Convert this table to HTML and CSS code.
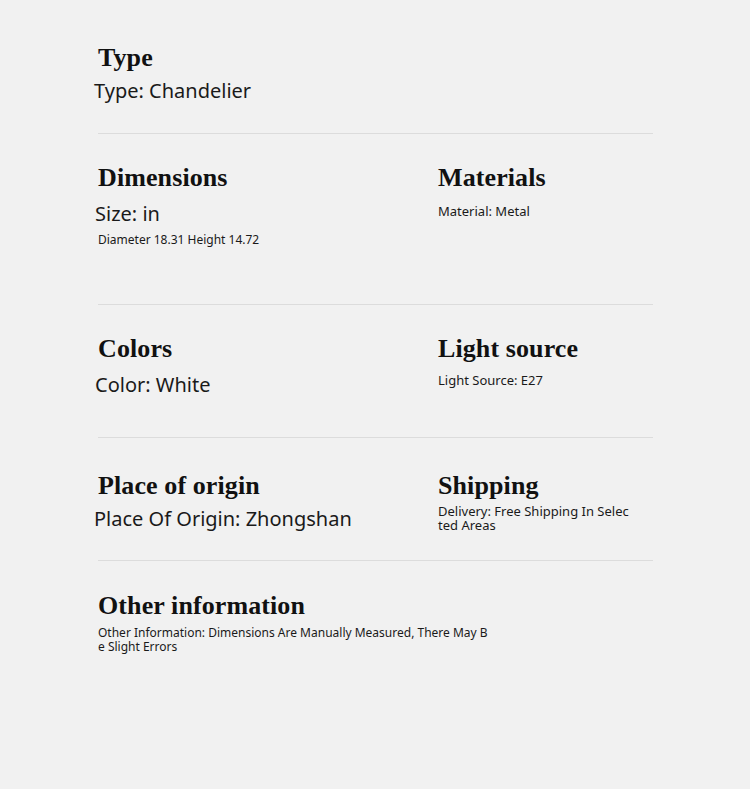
FILE: index.html
```html
<!DOCTYPE html>
<html lang="en">
<head>
<meta charset="utf-8">
<title>Specifications</title>
<link rel="stylesheet" href="styles.css">
</head>
<body>
<main class="specs">
  <section class="block block-type">
    <h2 class="title">Type</h2>
    <p class="val-lg nudge">Type: Chandelier</p>
  </section>

  <section class="block row row-dim">
    <div class="col">
      <h2 class="title">Dimensions</h2>
      <p class="val-lg nudge1">Size: in</p>
      <p class="val-sm dim-detail">Diameter 18.31 Height 14.72</p>
    </div>
    <div class="col">
      <h2 class="title">Materials</h2>
      <p class="val-sm mat">Material: Metal</p>
    </div>
  </section>

  <section class="block row row-col">
    <div class="col">
      <h2 class="title">Colors</h2>
      <p class="val-lg nudge1">Color: White</p>
    </div>
    <div class="col">
      <h2 class="title">Light source</h2>
      <p class="val-sm light">Light Source: E27</p>
    </div>
  </section>

  <section class="block row row-origin">
    <div class="col">
      <h2 class="title">Place of origin</h2>
      <p class="val-lg nudge origin">Place Of Origin: Zhongshan</p>
    </div>
    <div class="col">
      <h2 class="title">Shipping</h2>
      <p class="val-sm wrap ship">Delivery: Free Shipping In Selected Areas</p>
    </div>
  </section>

  <section class="block last">
    <h2 class="title">Other information</h2>
    <p class="val-sm wrap other">Other Information: Dimensions Are Manually Measured, There May Be Slight Errors</p>
  </section>
</main>
</body>
</html>
```

FILE: styles.css
```css
html, body {
  margin: 0;
  padding: 0;
  background: #f1f1f1;
}

body {
  font-family: "Noto Sans", "Open Sans", sans-serif;
  color: #1a1a1a;
}

.specs {
  width: 555px;
  margin-left: 98px;
}

.block {
  border-bottom: 1px solid #dcdcdc;
}

.block.last {
  border-bottom: none;
}

.title {
  margin: 0;
  font-family: "Liberation Serif", "Times New Roman", serif;
  font-weight: 700;
  font-size: 26px;
  line-height: 32px;
  letter-spacing: 0.1px;
  color: #111;
}

.val-lg {
  margin: 0;
  font-size: 20px;
  line-height: 27px;
}

.val-sm {
  margin: 0;
  font-size: 13px;
  line-height: 14px;
}

.nudge { margin-left: -4px; }
.nudge1 { margin-left: -3px; }

.wrap { word-break: break-all; }

.row {
  display: grid;
  grid-template-columns: 340px 1fr;
}

/* section 1 */
.block-type { padding-top: 42px; height: 91px; }
.block-type .val-lg { margin-top: 3px; }

/* section 2 */
.row-dim { padding-top: 28px; height: 142px; }
.row-dim .val-lg { margin-top: 6px; }
.dim-detail { margin-top: 6px; font-size: 12px; }
.mat { margin-top: 10px; }

/* section 3 */
.row-col { padding-top: 28px; height: 104px; }
.row-col .val-lg { margin-top: 6px; }
.light { margin-top: 8px; }

/* section 4 */
.row-origin { padding-top: 32px; height: 90px; }
.origin { margin-top: 3px; }
.ship { margin-top: 2px; width: 195px; }

/* section 5 */
.last { padding-top: 29px; }
.other { margin-top: 4px; width: 392px; font-size: 12px; }
```
